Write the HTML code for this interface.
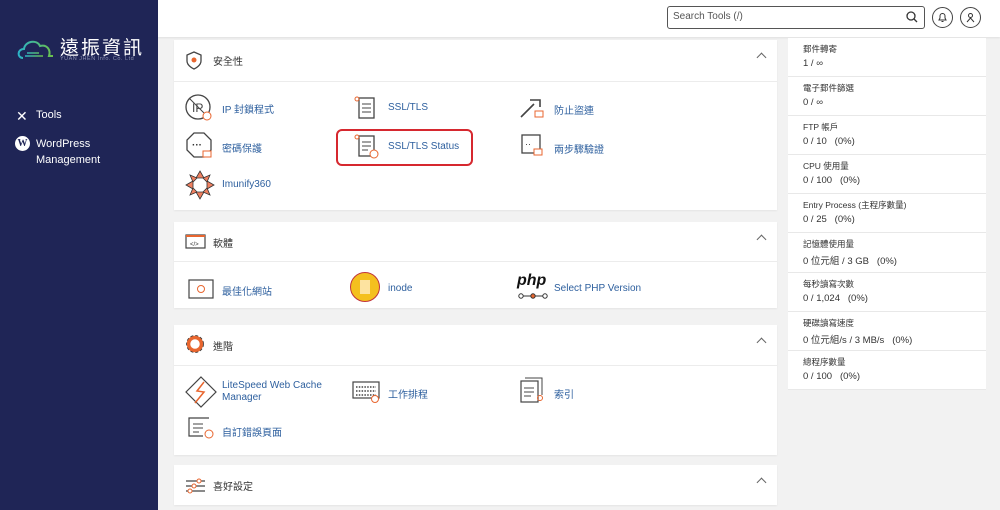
<!DOCTYPE html>
<html><head><meta charset="utf-8"><style>
*{box-sizing:border-box;margin:0;padding:0}
body{width:1000px;height:510px;overflow:hidden;background:#f2f2f2;font-family:"Liberation Sans","Noto Sans CJK TC",sans-serif;position:relative;font-size:10px;color:#333}
.side{position:absolute;left:0;top:0;width:158px;height:510px;background:#1f2556}
.hdr{position:absolute;left:158px;top:0;width:842px;height:37px;background:#fff;box-shadow:0 1px 2px rgba(0,0,0,.08)}
.panel{position:absolute;left:174px;width:603px;background:#fff;box-shadow:0 1px 2px rgba(0,0,0,.06)}
.ph{height:42px;border-bottom:1px solid #ececec;position:relative}
.ph .t{position:absolute;left:39px;top:13px;font-size:10px;color:#333}
.ph .ic{position:absolute;left:11px;top:11px}
.ph .car{position:absolute;right:12px;top:14px;width:7px;height:7px;border-left:1.5px solid #666;border-top:1.5px solid #666;transform:rotate(45deg)}
.it{position:absolute;font-size:10px;color:#2d5f9e}
.itic{position:absolute}
.stat{position:absolute;left:788px;width:198px;height:39px;background:#fff;border-bottom:1px solid #e8e8e8}
.stat .a{position:absolute;left:15px;top:5px;font-size:8.5px;color:#333}
.stat .b{position:absolute;left:15px;top:20px;font-size:9.5px;color:#333}
</style></head><body>
<div class="side">
<svg style="position:absolute;left:17px;top:36px" width="40" height="28" viewBox="0 0 40 28"><defs><linearGradient id="g" x1="0" x2="1"><stop offset="0" stop-color="#2bb3c8"/><stop offset="1" stop-color="#6cc04a"/></linearGradient></defs><path d="M6 22 C0 22 0 13 7 13 C8 5 20 3 23 10 C30 8 34 14 32 20 L36 20" fill="none" stroke="url(#g)" stroke-width="2"/><path d="M10 17 H22 M8 20 H26" stroke="url(#g)" stroke-width="1.6"/></svg>
<div style="position:absolute;left:60px;top:36px;color:#fff;font-size:19px;letter-spacing:2px;font-family:'Noto Sans CJK TC',sans-serif;line-height:21px">遠振資訊</div>
<div style="position:absolute;left:60px;top:56px;color:#8a90b0;font-size:5.5px;letter-spacing:.5px">YUAN JHEN Info. Co. Ltd</div>
<div style="position:absolute;left:16px;top:108px;color:#fff;font-size:14px">✕</div>
<div style="position:absolute;left:36px;top:109px;color:#fff;font-size:11px">Tools</div>
<div style="position:absolute;left:15px;top:136px;width:15px;height:15px;border-radius:50%;background:#fff;color:#1f2556;font-size:10px;font-weight:bold;text-align:center;line-height:15px;font-family:'Liberation Serif',serif">W</div>
<div style="position:absolute;left:36px;top:136px;color:#fff;font-size:11px;line-height:16px">WordPress<br>Management</div>
</div>
<div class="hdr">
<div style="position:absolute;left:509px;top:6px;width:258px;height:23px;border:1px solid #555;border-radius:3px"></div>
<div style="position:absolute;left:515px;top:11px;font-size:10px;color:#555">Search Tools (/)</div>
<svg style="position:absolute;left:748px;top:11px" width="12" height="12"><circle cx="5" cy="5" r="4" fill="none" stroke="#333" stroke-width="1.3"/><path d="M8 8 L11 11" stroke="#333" stroke-width="1.3"/></svg>
<div style="position:absolute;left:774px;top:7px;width:21px;height:21px;border:1.3px solid #444;border-radius:50%"></div>
<svg style="position:absolute;left:779px;top:12px" width="11" height="11"><path d="M2 8 H9 L8 6 V4 A2.5 2.5 0 0 0 3 4 V6 Z M4.5 9.5 H6.5" fill="none" stroke="#333"/></svg>
<div style="position:absolute;left:802px;top:7px;width:21px;height:21px;border:1.3px solid #444;border-radius:50%"></div>
<svg style="position:absolute;left:807px;top:12px" width="11" height="11"><circle cx="5.5" cy="3.5" r="2" fill="none" stroke="#333"/><path d="M2 10 L5.5 6 L9 10" fill="none" stroke="#333"/></svg>
</div>

<div class="panel" style="top:40px;height:170px">
<div class="ph"><svg class="ic" width="18" height="20"><path d="M9 1 L16 4 V10 C16 15 9 18 9 18 C9 18 2 15 2 10 V4 Z" fill="none" stroke="#444" stroke-width="1.3"/><circle cx="9" cy="9" r="2.5" fill="#e8662f"/></svg><span class="t">安全性</span><span class="car"></span></div>
<svg class="itic" style="left:11px;top:54px" width="28" height="28"><circle cx="13" cy="13" r="12" fill="none" stroke="#444" stroke-width="1.3"/><text x="7" y="18" font-size="12" fill="#444" font-family="Liberation Sans">IP</text><path d="M4 4 L22 22" stroke="#444"/><circle cx="22" cy="22" r="4" fill="#fff" stroke="#e8662f"/></svg>
<div class="it" style="left:48px;top:61px">IP 封鎖程式</div>
<svg class="itic" style="left:180px;top:55px" width="24" height="26"><rect x="5" y="3" width="15" height="20" fill="none" stroke="#444" stroke-width="1.3"/><path d="M8 9H17M8 13H17M8 17H17" stroke="#444"/><circle cx="3" cy="4" r="2" fill="none" stroke="#e8662f"/></svg>
<div class="it" style="left:214px;top:62px">SSL/TLS</div>
<svg class="itic" style="left:344px;top:55px" width="28" height="26"><path d="M3 22 L12 13 M12 5 L22 5 L22 12 M8 17 L16 9" stroke="#444" stroke-width="1.6" fill="none"/><rect x="17" y="16" width="8" height="6" fill="none" stroke="#e8662f"/></svg>
<div class="it" style="left:380px;top:62px">防止盜連</div>
<svg class="itic" style="left:12px;top:92px" width="28" height="28"><polygon points="8,1 18,1 25,8 25,18 18,25 8,25 1,18 1,8" fill="none" stroke="#444" stroke-width="1.3"/><text x="6" y="16" font-size="10" font-weight="bold" fill="#333">···</text><rect x="17" y="19" width="8" height="6" fill="#fff" stroke="#e8662f"/></svg>
<div class="it" style="left:48px;top:100px">密碼保護</div>
<div style="position:absolute;left:162px;top:89px;width:137px;height:37px;border:2px solid #d6282f;border-radius:6px"></div>
<svg class="itic" style="left:180px;top:93px" width="28" height="26"><rect x="5" y="3" width="15" height="20" fill="none" stroke="#444" stroke-width="1.3"/><path d="M8 9H17M8 13H17M8 17H14" stroke="#444"/><circle cx="3" cy="4" r="2" fill="none" stroke="#e8662f"/><circle cx="20" cy="21" r="4" fill="#fff" stroke="#e8662f"/></svg>
<div class="it" style="left:214px;top:101px">SSL/TLS Status</div>
<svg class="itic" style="left:346px;top:93px" width="26" height="26"><rect x="2" y="2" width="18" height="18" fill="none" stroke="#444" stroke-width="1.3"/><text x="5" y="14" font-size="9" fill="#333">··</text><rect x="14" y="16" width="8" height="6" fill="#fff" stroke="#e8662f"/></svg>
<div class="it" style="left:380px;top:101px">兩步驟驗證</div>
<svg class="itic" style="left:11px;top:130px" width="30" height="30"><g fill="#f08060" stroke="#333" stroke-width=".8"><polygon points="15,1 19,8 11,8"/><polygon points="29,15 22,19 22,11"/><polygon points="15,29 11,22 19,22"/><polygon points="1,15 8,11 8,19"/><polygon points="5,5 12,8 8,12"/><polygon points="25,5 22,12 18,8"/><polygon points="25,25 18,22 22,18"/><polygon points="5,25 8,18 12,22"/></g></svg>
<div class="it" style="left:48px;top:139px">Imunify360</div>
</div>

<div class="panel" style="top:222px;height:86px">
<div class="ph" style="height:40px"><svg class="ic" style="top:12px" width="22" height="16"><rect x="1" y="1" width="19" height="13" fill="none" stroke="#444" stroke-width="1.2"/><rect x="1" y="1" width="19" height="2" fill="#e8662f"/><text x="5" y="12" font-size="6" fill="#333">&lt;/&gt;</text></svg><span class="t">軟體</span><span class="car"></span></div>
<svg class="itic" style="left:13px;top:56px" width="28" height="22"><rect x="2" y="2" width="24" height="18" fill="none" stroke="#444" stroke-width="1.2"/><circle cx="14" cy="11" r="3.5" fill="none" stroke="#e8662f"/></svg>
<div class="it" style="left:48px;top:61px">最佳化網站</div>
<div style="position:absolute;left:176px;top:50px;width:30px;height:30px;border-radius:50%;background:#f4c01e;border:1.5px solid #c0343a"></div>
<div style="position:absolute;left:186px;top:58px;width:10px;height:14px;background:#fde3a0"></div>
<div class="it" style="left:214px;top:61px">inode</div>
<div style="position:absolute;left:343px;top:50px;font-size:16px;font-weight:bold;font-style:italic;color:#111">php</div>
<svg class="itic" style="left:344px;top:70px" width="30" height="8"><path d="M3 4H27" stroke="#333"/><circle cx="3" cy="4" r="2.2" fill="#fff" stroke="#333"/><circle cx="15" cy="4" r="2.2" fill="#e8662f" stroke="#333"/><circle cx="27" cy="4" r="2.2" fill="#fff" stroke="#333"/></svg>
<div class="it" style="left:380px;top:61px">Select PHP Version</div>
</div>

<div class="panel" style="top:325px;height:130px">
<div class="ph" style="height:41px"><svg class="ic" style="top:9px" width="20" height="20"><circle cx="10" cy="10" r="6.5" fill="none" stroke="#e8662f" stroke-width="3.5"/><circle cx="10" cy="10" r="8.5" fill="none" stroke="#333" stroke-width=".8" stroke-dasharray="3 2"/></svg><span class="t">進階</span><span class="car"></span></div>
<svg class="itic" style="left:11px;top:51px" width="32" height="32"><polygon points="16,1 31,16 16,31 1,16" fill="none" stroke="#444" stroke-width="1.2"/><path d="M19 6 L12 15 L19 16 L10 27" fill="none" stroke="#e8662f" stroke-width="1.5"/></svg>
<div class="it" style="left:48px;top:55px;line-height:12px">LiteSpeed Web Cache<br>Manager</div>
<svg class="itic" style="left:178px;top:56px" width="30" height="24"><rect x="1" y="1" width="26" height="16" fill="none" stroke="#444" stroke-width="1.2"/><path d="M4 6H24M4 10H24M4 14H24" stroke="#444" stroke-dasharray="1.5 1.3" stroke-width="1.5"/><circle cx="23" cy="18" r="3.5" fill="#fff" stroke="#e8662f"/></svg>
<div class="it" style="left:214px;top:61px">工作排程</div>
<svg class="itic" style="left:346px;top:52px" width="26" height="28"><rect x="1" y="4" width="17" height="21" fill="none" stroke="#444" stroke-width="1.2"/><path d="M5 1H22V18" fill="none" stroke="#444"/><path d="M4 11H14M4 15H14M4 19H11" stroke="#444"/><circle cx="20" cy="21" r="2.5" fill="none" stroke="#e8662f"/></svg>
<div class="it" style="left:380px;top:61px">索引</div>
<svg class="itic" style="left:13px;top:91px" width="30" height="26"><path d="M22 2H2V20H16" fill="none" stroke="#444" stroke-width="1.2"/><path d="M6 8H16M6 12H16M6 16H12" stroke="#444"/><circle cx="22" cy="18" r="4" fill="#fff" stroke="#e8662f"/></svg>
<div class="it" style="left:48px;top:99px">自訂錯誤頁面</div>
</div>

<div class="panel" style="top:465px;height:40px">
<div class="ph" style="height:40px;border:none"><svg class="ic" style="top:13px" width="22" height="16"><path d="M1 3H20M1 8H20M1 13H20" stroke="#444" stroke-width="1.2"/><circle cx="14" cy="3" r="2" fill="#fff" stroke="#e8662f"/><circle cx="9" cy="8" r="2" fill="#fff" stroke="#e8662f"/><circle cx="5" cy="13" r="2" fill="#fff" stroke="#e8662f"/></svg><span class="t">喜好設定</span><span class="car"></span></div>
</div>

<div class="stat" style="top:38px"><div class="a">郵件轉寄</div><div class="b">1 / ∞</div></div>
<div class="stat" style="top:77px"><div class="a">電子郵件篩選</div><div class="b">0 / ∞</div></div>
<div class="stat" style="top:116px"><div class="a">FTP 帳戶</div><div class="b">0 / 10 &nbsp; (0%)</div></div>
<div class="stat" style="top:155px"><div class="a">CPU 使用量</div><div class="b">0 / 100 &nbsp; (0%)</div></div>
<div class="stat" style="top:194px"><div class="a">Entry Process (主程序數量)</div><div class="b">0 / 25 &nbsp; (0%)</div></div>
<div class="stat" style="top:233px;height:40px"><div class="a">記憶體使用量</div><div class="b">0 位元組 / 3 GB &nbsp; (0%)</div></div>
<div class="stat" style="top:273px"><div class="a">每秒讀寫次數</div><div class="b">0 / 1,024 &nbsp; (0%)</div></div>
<div class="stat" style="top:312px"><div class="a">硬碟讀寫速度</div><div class="b">0 位元組/s / 3 MB/s &nbsp; (0%)</div></div>
<div class="stat" style="top:351px"><div class="a">總程序數量</div><div class="b">0 / 100 &nbsp; (0%)</div></div>
</body></html>
